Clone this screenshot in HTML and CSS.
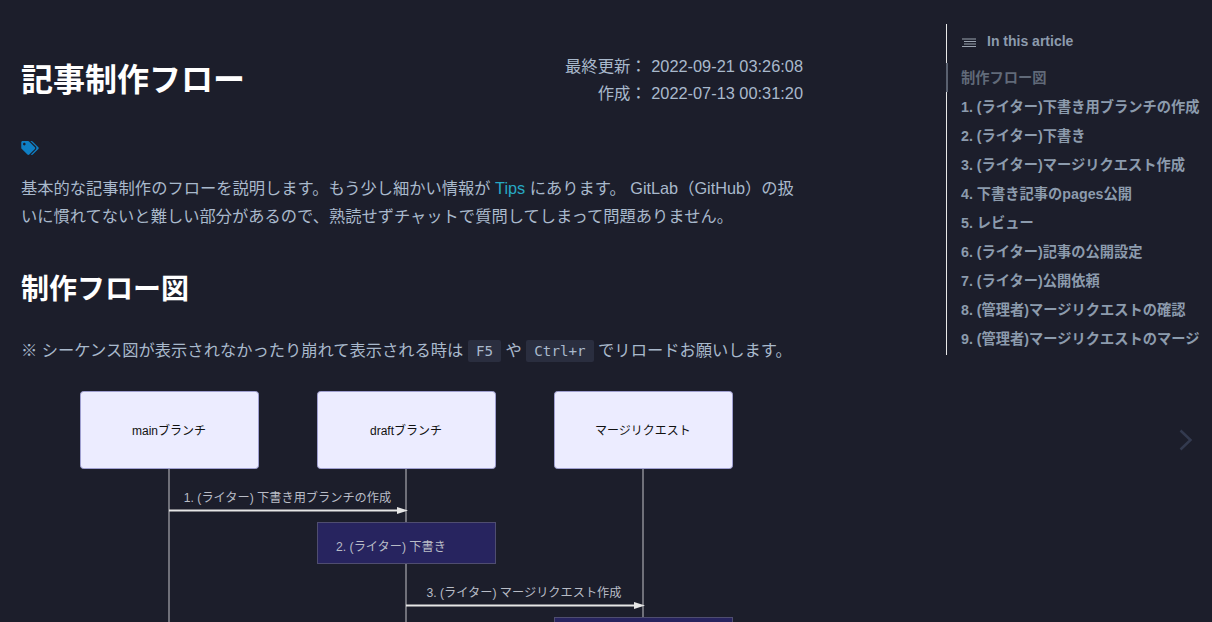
FILE: index.html
```html
<!DOCTYPE html>
<html lang="ja">
<head>
<meta charset="utf-8">
<title>記事制作フロー</title>
<link rel="stylesheet" href="styles.css">
</head>
<body>
<div class="page">
  <main class="article">
    <header class="head">
      <h1 class="title">記事制作フロー</h1>
      <div class="dates">
        <div>最終更新： 2022-09-21 03:26:08</div>
        <div>作成： 2022-07-13 00:31:20</div>
      </div>
    </header>
    <div class="tags">
      <svg class="tag-icon" viewBox="0 0 640 512" width="18" height="14" aria-hidden="true"><path fill="#0f7fc4" d="M497.9 225.9 286.1 14.1A48 48 0 0 0 252.1 0H48C21.5 0 0 21.5 0 48v204.1a48 48 0 0 0 14.1 33.9l211.9 211.9c18.7 18.7 49.1 18.7 67.9 0l204.1-204.1c18.7-18.7 18.7-49.2-.1-67.9zM112 160c-26.5 0-48-21.5-48-48s21.5-48 48-48 48 21.5 48 48-21.5 48-48 48zm513.9 133.8L421.8 497.9c-18.7 18.7-49.1 18.7-67.9 0l-.4-.4L527.6 323.5c17-17 26.4-39.6 26.4-63.6s-9.4-46.6-26.4-63.6L331.4 0h48.7a48 48 0 0 1 33.9 14.1l211.9 211.9c18.7 18.7 18.7 49.1 0 67.8z"/></svg>
    </div>
    <p class="text intro">基本的な記事制作のフローを説明します。もう少し細かい情報が <a class="link" href="#">Tips</a> にあります。 GitLab（GitHub）の扱いに慣れてないと難しい部分があるので、熟読せずチャットで質問してしまって問題ありません。</p>
    <h2 class="section">制作フロー図</h2>
    <p class="text note">※ シーケンス図が表示されなかったり崩れて表示される時は <code class="key">F5</code> や <code class="key">Ctrl+r</code> でリロードお願いします。</p>
    <svg class="diagram" width="782" height="240" viewBox="0 0 782 240" aria-label="シーケンス図">
      <line class="life" x1="148" y1="80" x2="148" y2="240"/>
      <line class="life" x1="385" y1="80" x2="385" y2="240"/>
      <line class="life" x1="622" y1="80" x2="622" y2="240"/>
      <rect class="actor" x="59.5" y="2.500" width="178" height="77" rx="3"/>
      <rect class="actor" x="296.5" y="2.500" width="178" height="77" rx="3"/>
      <rect class="actor" x="533.5" y="2.500" width="178" height="77" rx="3"/>
      <text class="actor-label" x="148" y="46">mainブランチ</text>
      <text class="actor-label" x="385" y="46">draftブランチ</text>
      <text class="actor-label" x="622" y="46">マージリクエスト</text>
      <text class="msg" x="266.5" y="113">1. (ライター) 下書き用ブランチの作成</text>
      <line class="arrow" x1="148" y1="121.5" x2="380" y2="121.5"/>
      <path class="head-fill" d="M376 118l11 3.500-11 3.500z"/>
      <rect class="activity" x="296.5" y="133.500" width="178" height="41"/>
      <text class="msg" x="370" y="162">2. (ライター) 下書き</text>
      <text class="msg" x="503" y="208">3. (ライター) マージリクエスト作成</text>
      <line class="arrow" x1="385" y1="216.500" x2="618" y2="216.500"/>
      <path class="head-fill" d="M613 213l11 3.500-11 3.500z"/>
      <rect class="activity" x="533.5" y="228.500" width="178" height="41"/>
    </svg>
  </main>
  <aside class="toc">
    <div class="toc-head">
      <svg class="toc-icon" width="14" height="10" viewBox="0 0 14 10" aria-hidden="true"><path d="M0 1h14M2 3.500h12M2 6h12M0 8.500h14" stroke="#9aa3b0" stroke-width="1.2" fill="none"/></svg>
      <span>In this article</span>
    </div>
    <ul class="toc-list">
      <li class="toc-item current">制作フロー図</li>
      <li class="toc-item">1. (ライター)下書き用ブランチの作成</li>
      <li class="toc-item">2. (ライター)下書き</li>
      <li class="toc-item">3. (ライター)マージリクエスト作成</li>
      <li class="toc-item">4. 下書き記事のpages公開</li>
      <li class="toc-item">5. レビュー</li>
      <li class="toc-item">6. (ライター)記事の公開設定</li>
      <li class="toc-item">7. (ライター)公開依頼</li>
      <li class="toc-item">8. (管理者)マージリクエストの確認</li>
      <li class="toc-item">9. (管理者)マージリクエストのマージ</li>
    </ul>
  </aside>
</div>
<a class="next" href="#" aria-label="次へ"><svg width="16" height="24" viewBox="0 0 16 24"><path d="M2.500 2.500 12.500 12 2.500 21.500" fill="none" stroke="#333a4f" stroke-width="2.500"/></svg></a>
</body>
</html>
```
FILE: styles.css
```css
* { box-sizing: border-box; }
html, body {
  margin: 0;
  height: 622px;
  overflow: hidden;
  background: #1c1e2b;
}
body {
  font-family: "Liberation Sans", "Noto Sans CJK JP", sans-serif;
  color: #a9b9cc;
  position: relative;
}
.page { display: flex; align-items: flex-start; }
.article { width: 782px; margin-left: 21px; padding-top: 49px; flex: none; }
.head { display: flex; justify-content: space-between; align-items: flex-start; height: 84px; }
.title {
  margin: 11px 0 0;
  font-size: 32px;
  line-height: 40px;
  font-weight: 700;
  color: #fff;
}
.dates { font-size: 16.35px; line-height: 27px; text-align: right; margin-top: 4px; }
.tags { height: 22px; margin-top: 4px; display: flex; align-items: center; }
.tag-icon { display: block; }
.text { margin: 0; width: 782px; font-size: 16.28px; line-height: 28px; }
.intro { margin-top: 15px; }
.link { color: #27a9c4; text-decoration: none; }
.section {
  margin: 42px 0 0;
  font-size: 28px;
  line-height: 36px;
  font-weight: 700;
  color: #fff;
}
.note { margin-top: 28px; }
.key {
  font-family: "DejaVu Sans Mono", monospace;
  font-size: 14.2px;
  background: #2a2e3f;
  padding: 3px 8px;
  border-radius: 2px;
}
.diagram { display: block; margin-top: 24px; }
.life { stroke: #c2c2c8; stroke-width: 1; }
.actor { fill: #ececff; stroke: #9f9fd0; stroke-width: 1; }
.actor-label { font-size: 12px; fill: #111; text-anchor: middle; }
.msg { font-size: 12.2px; fill: #b8bcc6; text-anchor: middle; }
.arrow { stroke: #e6e6e6; stroke-width: 2; }
.head-fill { fill: #e6e6e6; }
.activity { fill: #27245f; stroke: #4f4d70; stroke-width: 1; }
.toc {
  position: relative;
  width: 266px;
  height: 331px;
  margin: 24px 0 0 143px;
  flex: none;
  border-left: 1px solid #e8e8e8;
  font-size: 14.25px;
  font-weight: 700;
  color: #8c9bad;
}
.toc-head { display: flex; align-items: center; gap: 11px; height: 34px; padding-left: 15px; font-size: 14px; }
.toc-icon { display: block; margin-top: 3px; }
.toc-list { list-style: none; margin: 6px 0 0; padding: 0; }
.toc-item { height: 29px; line-height: 29px; padding-left: 14px; white-space: nowrap; position: relative; }
.current { color: #616a79; }
.current::before {
  content: "";
  position: absolute;
  left: -1px;
  top: -1px;
  width: 2px;
  height: 29px;
  background: #5a6170;
}
.next { position: absolute; left: 1178px; top: 428px; display: block; }
.next svg { display: block; }
```
